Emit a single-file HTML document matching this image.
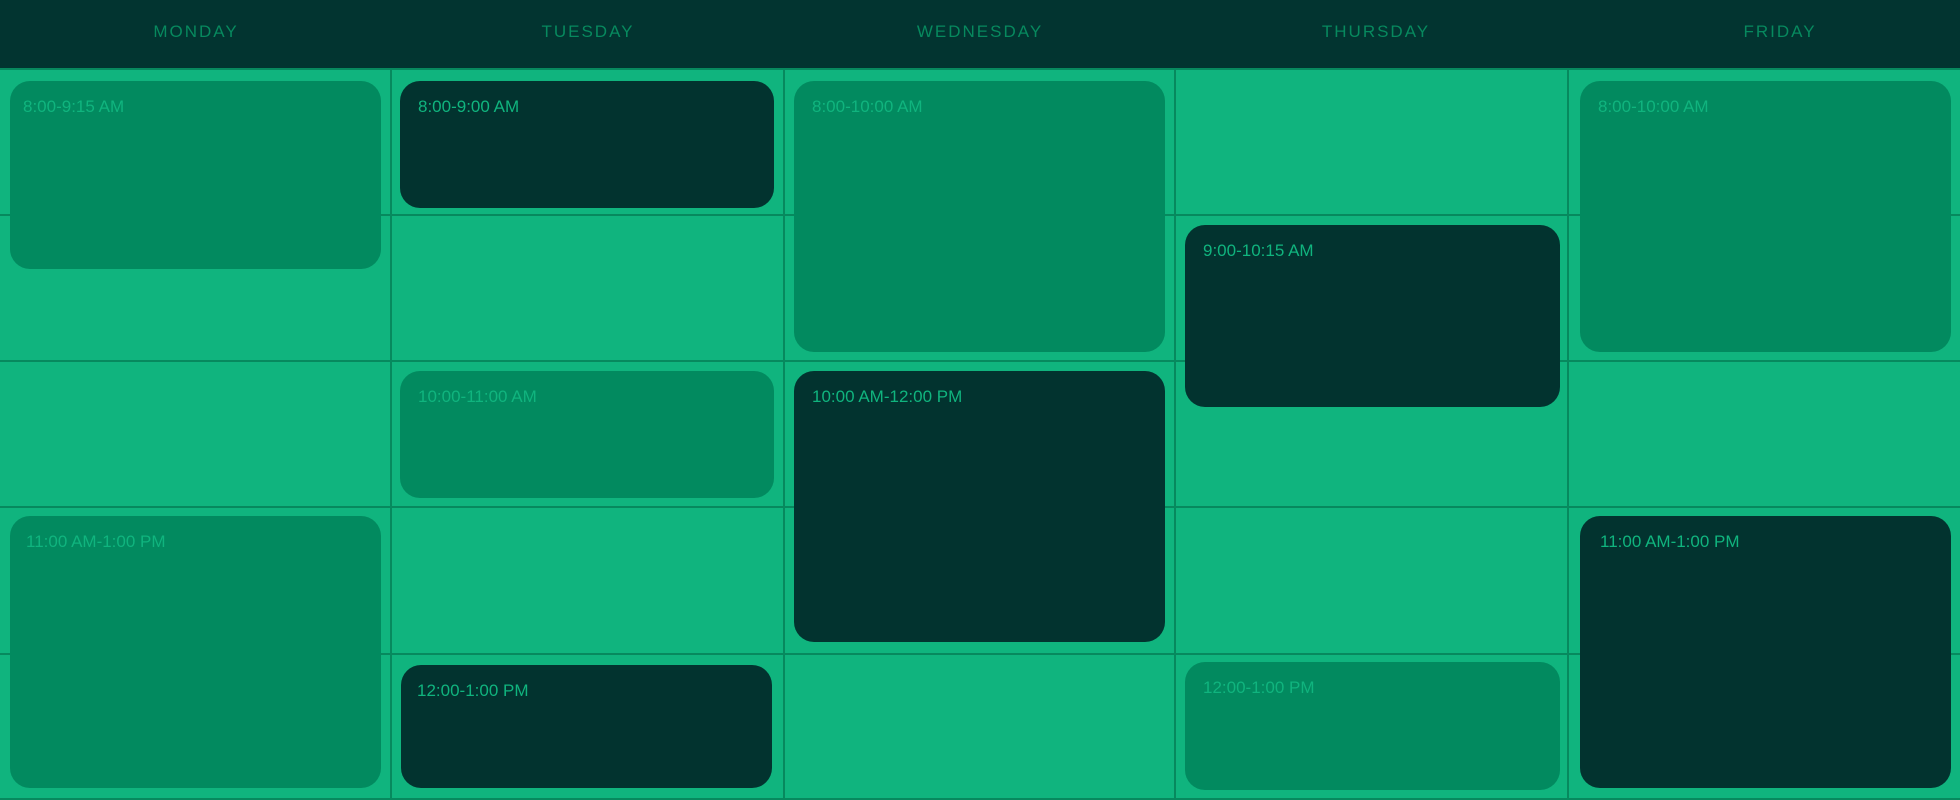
<!DOCTYPE html>
<html><head><meta charset="utf-8"><style>
*{margin:0;padding:0;box-sizing:border-box}
body{width:1960px;height:800px;overflow:hidden;background:#10b47e;font-family:"Liberation Sans",sans-serif;position:relative}
.hdr{position:absolute;left:0;top:0;width:1960px;height:70px;background:#023430;border-bottom:2px solid #07895e}
.hdr div{position:absolute;top:0;width:300px;height:67px;line-height:64px;text-align:center;color:#07895e;font-size:17px;letter-spacing:2px}
.v{position:absolute;top:69px;bottom:0;width:2px;background:#07895e}
.h{position:absolute;left:0;width:1960px;height:2px;background:#07895e}
.e{position:absolute;border-radius:20px;font-size:17px;padding:16px 0 0 18px;letter-spacing:0}
.m{background:#028a5f;color:#10b47e}
.d{background:#02332f;color:#10b47e}
</style></head><body>
<div class="hdr">
<div style="left:46px">MONDAY</div>
<div style="left:438px">TUESDAY</div>
<div style="left:830px">WEDNESDAY</div>
<div style="left:1226px">THURSDAY</div>
<div style="left:1630px">FRIDAY</div>
</div>
<div class="v" style="left:390px"></div>
<div class="v" style="left:783px"></div>
<div class="v" style="left:1174px"></div>
<div class="v" style="left:1567px"></div>
<div class="h" style="top:214px"></div>
<div class="h" style="top:360px"></div>
<div class="h" style="top:506px"></div>
<div class="h" style="top:653px"></div>
<div class="h" style="top:798px"></div>

<div class="e m" style="left:10px;top:81px;width:371px;height:188px;padding-left:13px">8:00-9:15 AM</div>
<div class="e d" style="left:400px;top:81px;width:374px;height:127px">8:00-9:00 AM</div>
<div class="e m" style="left:794px;top:81px;width:371px;height:271px">8:00-10:00 AM</div>
<div class="e d" style="left:1185px;top:225px;width:375px;height:182px">9:00-10:15 AM</div>
<div class="e m" style="left:1580px;top:81px;width:371px;height:271px">8:00-10:00 AM</div>
<div class="e m" style="left:400px;top:371px;width:374px;height:127px">10:00-11:00 AM</div>
<div class="e d" style="left:794px;top:371px;width:371px;height:271px">10:00 AM-12:00 PM</div>
<div class="e m" style="left:10px;top:516px;width:371px;height:272px;padding-left:16px">11:00 AM-1:00 PM</div>
<div class="e d" style="left:401px;top:665px;width:371px;height:123px;padding-left:16px">12:00-1:00 PM</div>
<div class="e m" style="left:1185px;top:662px;width:375px;height:128px">12:00-1:00 PM</div>
<div class="e d" style="left:1580px;top:516px;width:371px;height:272px;padding-left:20px">11:00 AM-1:00 PM</div>
</body></html>
